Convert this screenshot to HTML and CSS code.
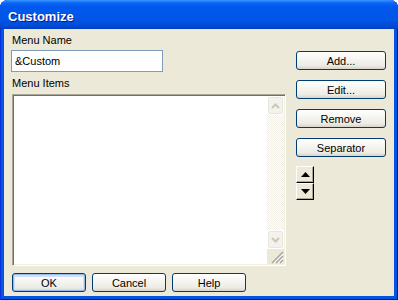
FILE: index.html
```html
<!DOCTYPE html>
<html lang="en">
<head>
    <meta charset="UTF-8">
    <title>Customize</title>
    <link rel="stylesheet" href="styles.css">
</head>
<body>

    <div class="window">
        <div class="titlebar">
            <span class="title">Customize</span>
        </div>

        <div class="dialog">
            <div class="left">
                <label class="label">Menu Name</label>
                <div class="input">&amp;Custom</div>
                <label class="label label-items">Menu Items</label>

                <div class="listbox">
                    <div class="list-area"></div>
                    <div class="scrollbar">
                        <div class="scroll-btn">
                            <svg width="9" height="6" viewBox="0 0 9 6"><path d="M1 5 L4.5 1.5 L8 5" fill="none" stroke="#c9c7ba" stroke-width="2"/></svg>
                        </div>
                        <div class="track"></div>
                        <div class="scroll-btn">
                            <svg width="9" height="6" viewBox="0 0 9 6"><path d="M1 1 L4.5 4.5 L8 1" fill="none" stroke="#c9c7ba" stroke-width="2"/></svg>
                        </div>
                        <div class="grip">
                            <svg width="15" height="15" viewBox="0 0 15 15">
                                <path d="M14 3 L3 14 M14 7 L7 14 M14 11 L11 14" stroke="#aca899" stroke-width="1.5"/>
                                <path d="M14 5 L5 14 M14 9 L9 14 M14 13 L13 14" stroke="#fff" stroke-width="1"/>
                            </svg>
                        </div>
                    </div>
                </div>

                <div class="bottom">
                    <button class="btn btn-default">OK</button>
                    <button class="btn">Cancel</button>
                    <button class="btn">Help</button>
                </div>
            </div>

            <div class="side">
                <button class="btn">Add...</button>
                <button class="btn">Edit...</button>
                <button class="btn">Remove</button>
                <button class="btn">Separator</button>

                <div class="updown">
                    <div class="arrow">
                        <svg width="9" height="5" viewBox="0 0 9 5"><path d="M0 5 L4.5 0 L9 5 Z" fill="#000"/></svg>
                    </div>
                    <div class="arrow">
                        <svg width="9" height="5" viewBox="0 0 9 5"><path d="M0 0 L4.5 5 L9 0 Z" fill="#000"/></svg>
                    </div>
                </div>
            </div>
        </div>
    </div>

</body>
</html>
```

FILE: styles.css
```css
* {
    padding: 0;
    margin: 0;
    box-sizing: border-box;
}

body {
    background-color: #ffffff;
    font-family: "Liberation Sans", Arial, sans-serif;
    font-size: 11px;
    color: #000000;
}

.window {
    width: 398px;
    height: 300px;
    display: flex;
    flex-direction: column;
    background-color: #0553e1;
    border-radius: 8px 8px 0 0;
    overflow: hidden;
    box-shadow: inset 1px 0 #0831d9, inset -1px 0 #001ea0, inset 0 -1px #001ea0;
}

.titlebar {
    height: 29px;
    display: flex;
    align-items: center;
    padding: 3px 0 0 8px;
    background: linear-gradient(#3d95ff 0, #0a66f5 3px, #0058ee 7px, #0055e5 20px, #0048d2 27px, #003cb4 29px);
}

.title {
    color: #ffffff;
    font-size: 13px;
    font-weight: bold;
    text-shadow: 1px 1px #0a1883;
}

.dialog {
    flex: 1;
    margin: 0 4px 4px 4px;
    background-color: #ece9d8;
    display: grid;
    grid-template-columns: 275px 90px;
    column-gap: 10px;
    padding: 5px 8px 0 7px;
}

.left {
    display: flex;
    flex-direction: column;
}

.label {
    height: 13px;
    line-height: 13px;
    padding-left: 1px;
}

.input {
    width: 152px;
    height: 22px;
    margin-top: 3px;
    border: 1px solid #7f9db9;
    background-color: #ffffff;
    padding-left: 3px;
    line-height: 20px;
}

.label-items {
    margin-top: 5px;
}

.listbox {
    width: 274px;
    height: 172px;
    margin: 4px 0 0 1px;
    display: flex;
    background-color: #ffffff;
    border: 1px solid;
    border-color: #aca899 #ffffff #ffffff #aca899;
    box-shadow: inset 1px 1px #716f64, inset -1px -1px #f1efe2;
    padding: 1px;
}

.list-area {
    flex: 1;
}

.scrollbar {
    width: 17px;
    display: flex;
    flex-direction: column;
}

.scroll-btn {
    height: 17px;
    display: flex;
    align-items: center;
    justify-content: center;
    margin: 1px;
    border: 1px solid #e8e6dc;
    border-radius: 2px;
    background-color: #f3f2ec;
}

.track {
    flex: 1;
    background: conic-gradient(#ffffff 25%, #f1efe6 0 50%, #ffffff 0 75%, #f1efe6 0) 0 0 / 2px 2px;
}

.grip {
    height: 15px;
    background-color: #ece9d8;
    display: flex;
    align-items: flex-end;
    justify-content: flex-end;
}

.bottom {
    display: flex;
    gap: 6px;
    margin: 7px 0 0 1px;
}

.btn {
    width: 74px;
    height: 19px;
    border: 1px solid #003c74;
    border-radius: 3px;
    background: linear-gradient(#ffffff, #f5f4ef 45%, #ecebe4 80%, #d8d3c8);
    font-family: "Liberation Sans", Arial, sans-serif;
    font-size: 11px;
    color: #000000;
}

.btn-default {
    box-shadow: inset 0 0 0 1px #98b8ea, inset 0 1px 0 2px #cee0fb;
}

.side {
    display: flex;
    flex-direction: column;
    gap: 10px;
    padding-top: 17px;
}

.side .btn {
    width: 90px;
}

.updown {
    width: 18px;
    margin-top: -1px;
    display: flex;
    flex-direction: column;
}

.arrow {
    height: 17px;
    display: flex;
    align-items: center;
    justify-content: center;
    background-color: #ece9d8;
    border: 1px solid;
    border-color: #ffffff #000000 #000000 #ffffff;
    box-shadow: inset -1px -1px #aca899;
}
```
